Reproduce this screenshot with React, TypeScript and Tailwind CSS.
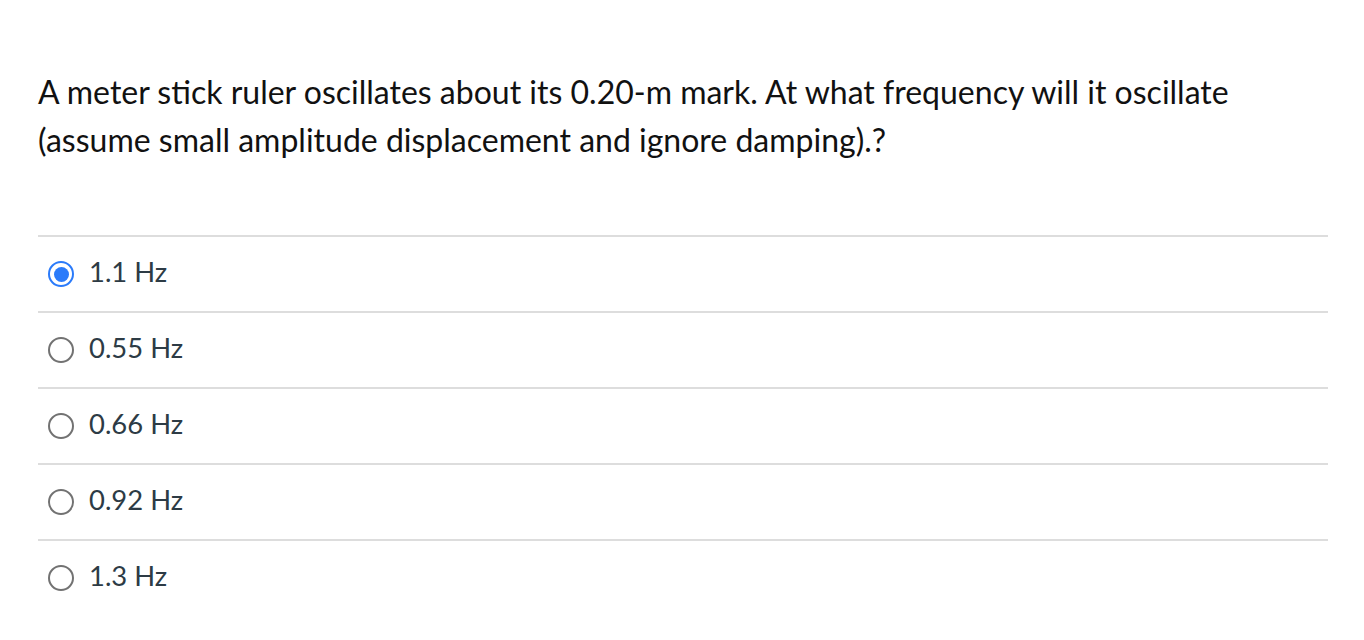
import React from "react";

const options = ["1.1 Hz", "0.55 Hz", "0.66 Hz", "0.92 Hz", "1.3 Hz"];

export default function App() {
  return (
    <div className="w-[1364px] h-[640px] bg-white" style={{ fontFamily: "Lato, 'Open Sans', sans-serif" }}>
      <div className="pl-[38px] pr-[36px] pt-[68px]">
        <p className="text-[32px] leading-[48px] text-[#111111]">
          A meter stick ruler oscillates about its 0.20-m mark. At what frequency will it oscillate (assume small amplitude displacement and ignore damping).?
        </p>
        <div className="mt-[71px]">
          {options.map((o, i) => (
            <div key={o} className="h-[76px] border-t-2 border-[#dddddd] flex items-center pl-[10px] gap-[15px]">
              {i === 0 ? (
                <span className="w-[26px] h-[26px] rounded-full border-[2.5px] border-[#2b7bfa] flex items-center justify-center">
                  <span className="w-[15px] h-[15px] rounded-full bg-[#2b7bfa]" />
                </span>
              ) : (
                <span className="w-[26px] h-[26px] rounded-full border-2 border-[#727272]" />
              )}
              <span className="text-[27.4px] leading-[32px] -mt-[4px] text-[#2d3b45]">{o}</span>
            </div>
          ))}
        </div>
      </div>
    </div>
  );
}
